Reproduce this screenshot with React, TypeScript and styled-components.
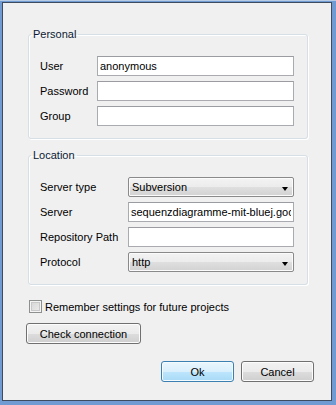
import React from 'react';
import styled, {createGlobalStyle} from 'styled-components';

const GlobalStyle = createGlobalStyle`
  html, body {
    margin: 0;
    padding: 0;
    background: #6f9ad2;
  }
  body {
    font-family: "Liberation Sans", Arial, sans-serif;
    font-size: 11px;
    color: #000;
  }
`

const Frame = styled.div`
  width: 336px;
  height: 405px;
  box-sizing: border-box;
  padding: 1px 4px 4px 2px;
  background: #6f9ad2;
  border-top: 1px solid #b8cbe4;
  display: flex;
`

const Dialog = styled.div`
  flex: 1;
  display: flex;
  flex-direction: column;
  background: #f0f0f0;
  border: 1px solid #3e4c60;
  padding: 25px 17px 0 23px;
`

const Group = styled.fieldset`
  margin: 0 6px 0 2px;
  padding: 15px 13px 12px 11px;
  border: 1px solid #d5dfe5;
  border-radius: 3px;
  box-shadow: inset 1px 1px 0 #fff, 1px 1px 0 #fff;
  display: grid;
  grid-template-columns: ${p => p.$labelWidth}px 1fr;
  row-gap: 5px;
  align-items: center;

  & + & {
    margin-top: 10px;
  }
`

const Legend = styled.legend`
  margin-left: -9px;
  padding: 0 2px;
  line-height: 13px;
  color: #0b1a33;
`

const Label = styled.label`
  white-space: nowrap;
`

const TextField = styled.input`
  box-sizing: border-box;
  height: 20px;
  width: 100%;
  margin: 0;
  padding: 0 2px;
  border: 1px solid #a9abb0;
  border-top-color: #9a9ca2;
  background: #fff;
  font: inherit;
  color: #000;
  outline: none;
`

const Combo = styled.div`
  box-sizing: border-box;
  height: 20px;
  display: flex;
  align-items: center;
  justify-content: space-between;
  padding: 0 5px 0 3px;
  border: 1px solid #8a8a8a;
  border-radius: 2px;
  background: linear-gradient(#f3f3f3 0%, #ececec 50%, #dfdfdf 51%, #d2d2d2 100%);
  box-shadow: inset 0 0 0 1px #fbfbfb;
`

const Arrow = styled.span`
  width: 0;
  height: 0;
  margin-top: 3px;
  border-left: 3.5px solid transparent;
  border-right: 3.5px solid transparent;
  border-top: 4px solid #000;
`

const CheckRow = styled.label`
  display: flex;
  align-items: center;
  gap: 3px;
  margin: 15px 0 0 3px;
`

const CheckBox = styled.span`
  box-sizing: border-box;
  width: 13px;
  height: 13px;
  border: 1px solid #8e8f8f;
  background: linear-gradient(135deg, #d4d4d4 0%, #eeeeee 100%);
  box-shadow: inset 0 0 0 1px #f4f4f4, inset 0 0 0 2px #c8c8c8;
`

const Button = styled.button`
  box-sizing: border-box;
  height: 21px;
  width: ${p => p.$width}px;
  margin: 0;
  padding: 0;
  font: inherit;
  color: #000;
  border-radius: 3px;
  border: 1px solid ${p => p.$primary ? '#3c7fb1' : '#707070'};
  background: ${p => p.$primary
    ? 'linear-gradient(#eaf6fd 0%, #d9f0fc 50%, #bee6fd 51%, #a7d9f5 100%)'
    : 'linear-gradient(#f2f2f2 0%, #ebebeb 50%, #dddddd 51%, #cfcfcf 100%)'};
  box-shadow: inset 0 0 0 1px ${p => p.$primary ? '#f4fbfe' : '#fcfcfc'};
`

const CheckButtonRow = styled.div`
  margin-top: 10px;
`

const Footer = styled.div`
  display: flex;
  justify-content: flex-end;
  gap: 7px;
  margin-top: 17px;
`

const App = () => {
    return (
        <>
            <GlobalStyle/>
            <Frame>
                <Dialog>
                    <Group $labelWidth={57}>
                        <Legend>Personal</Legend>
                        <Label>User</Label>
                        <TextField readOnly value="anonymous"/>
                        <Label>Password</Label>
                        <TextField readOnly type="password" value=""/>
                        <Label>Group</Label>
                        <TextField readOnly value=""/>
                    </Group>
                    <Group $labelWidth={88}>
                        <Legend>Location</Legend>
                        <Label>Server type</Label>
                        <Combo>Subversion<Arrow/></Combo>
                        <Label>Server</Label>
                        <TextField readOnly value="sequenzdiagramme-mit-bluej.googlecode.com/svn"/>
                        <Label>Repository Path</Label>
                        <TextField readOnly value=""/>
                        <Label>Protocol</Label>
                        <Combo>http<Arrow/></Combo>
                    </Group>
                    <CheckRow>
                        <CheckBox/>
                        Remember settings for future projects
                    </CheckRow>
                    <CheckButtonRow>
                        <Button $width={115}>Check connection</Button>
                    </CheckButtonRow>
                    <Footer>
                        <Button $primary $width={73}>Ok</Button>
                        <Button $width={73}>Cancel</Button>
                    </Footer>
                </Dialog>
            </Frame>
        </>
    );
};

export default App;
